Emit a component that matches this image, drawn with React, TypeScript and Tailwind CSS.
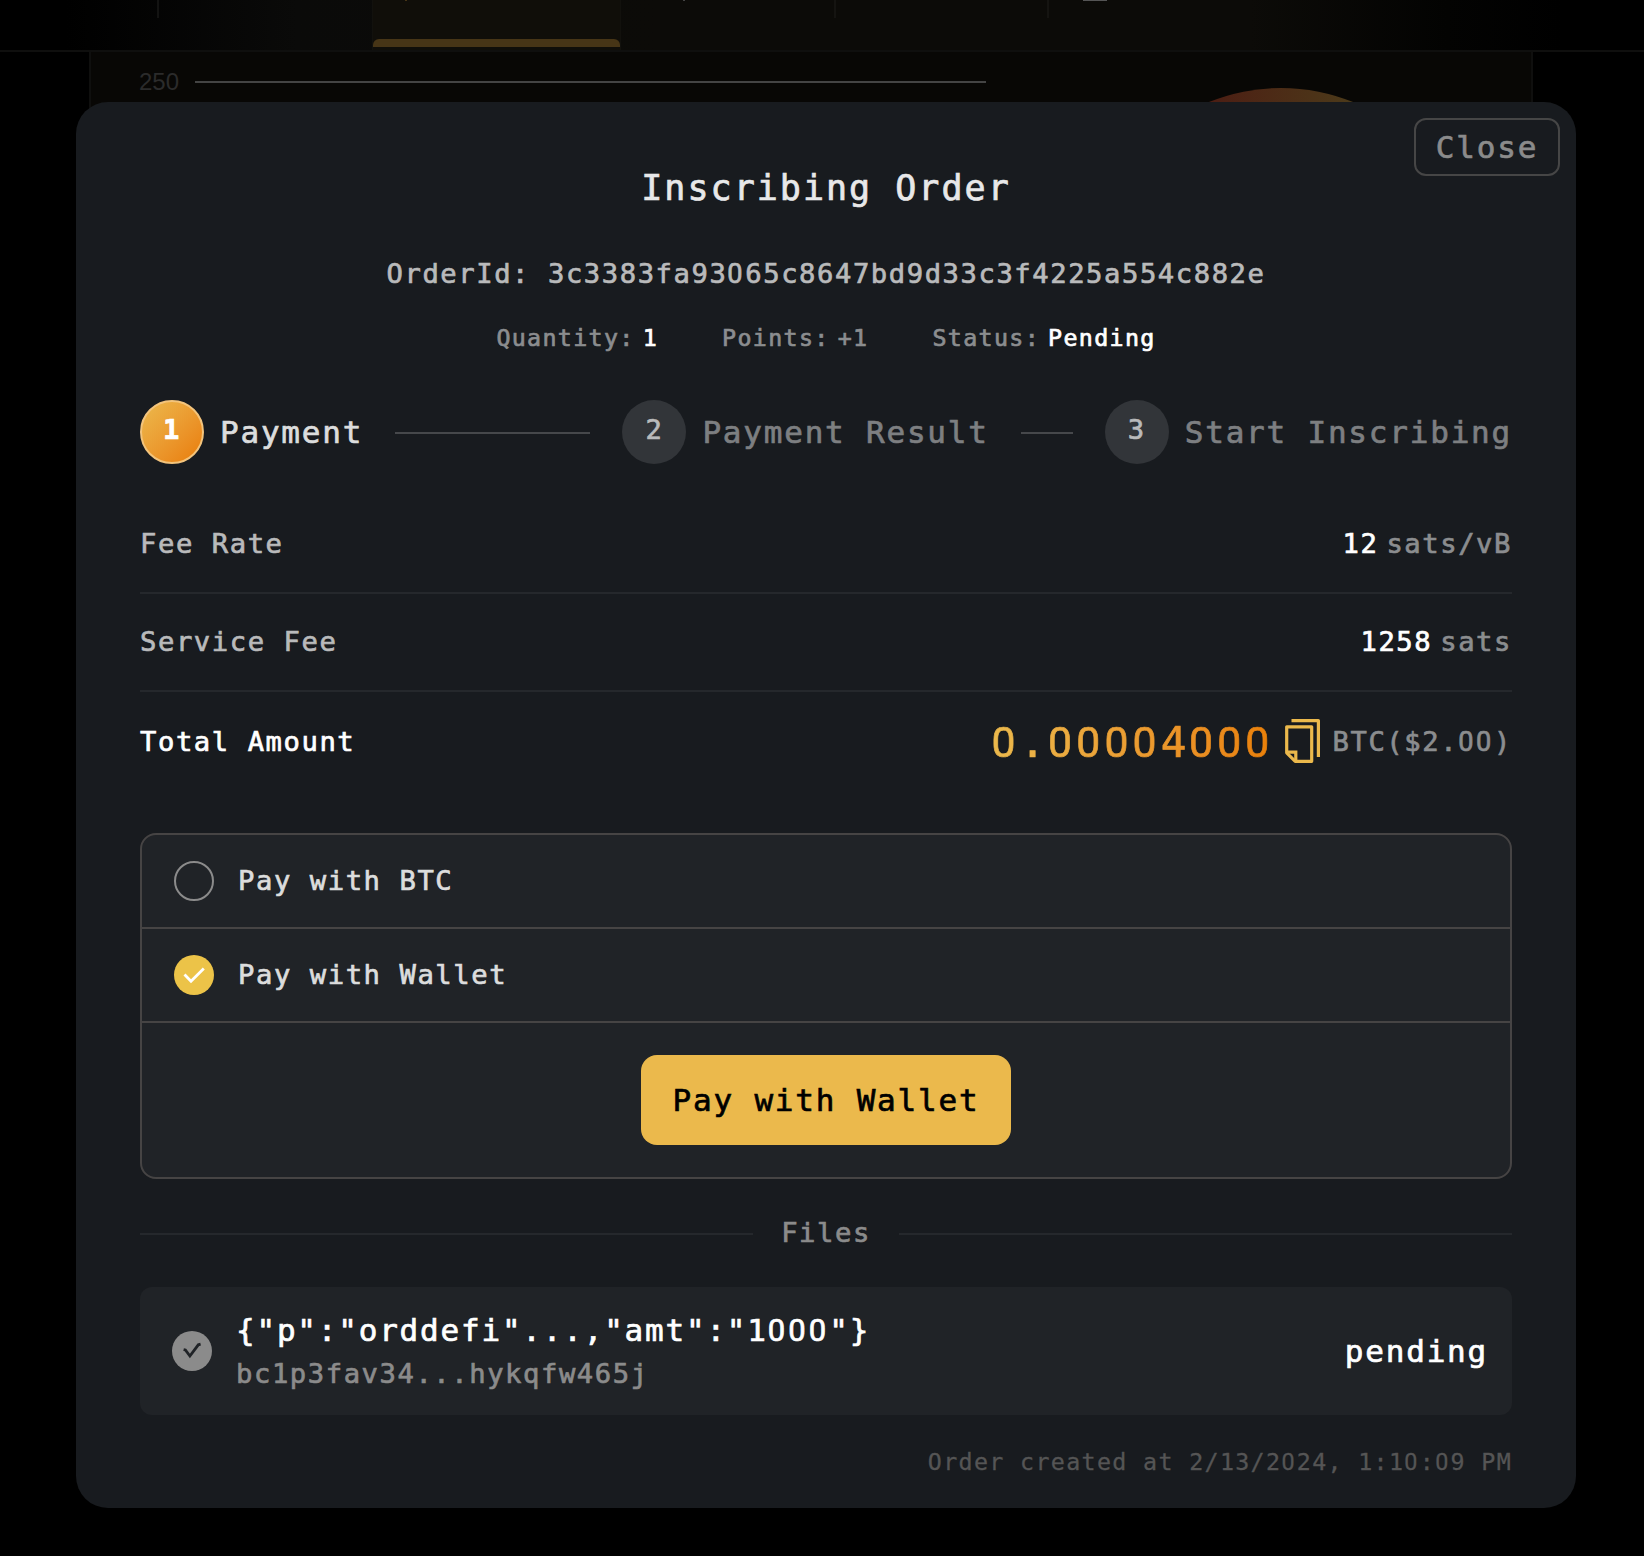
import React from "react";

/* Monospaced text; zeros are set in the open, undotted form. */
function Mono({ children }: { children: string }) {
  return (
    <>
      {children.split(/(0+)/).map((part, i) =>
        part.startsWith("0") ? (
          <span key={i} className="font-[Roboto] leading-none tracking-[0.0985em]!">
            {part}
          </span>
        ) : (
          part
        ),
      )}
    </>
  );
}

function CopyIcon() {
  return (
    <svg viewBox="0 0 44 44" className="mx-[7.5px] -mt-0.5 size-11 shrink-0" fill="none" stroke="#ebb94c" strokeWidth="3.2">
      <path d="M10.5 1.6H37.4V38" strokeLinejoin="round" />
      <path d="M5.7 7.8H30.7V42.3H14.2L5.7 33.8Z" strokeLinejoin="round" />
      <path d="M5.7 33.2H14.8V42.3" />
    </svg>
  );
}

function Check({ className, stroke, d }: { className: string; stroke: string; d: string }) {
  return (
    <span className={className}>
      <svg viewBox="0 0 40 40" className="size-10" fill="none" stroke={stroke} strokeWidth="2.8">
        <path d={d} />
      </svg>
    </span>
  );
}

function Step({ n, label, active, last }: { n: string; label: string; active?: boolean; last?: boolean }) {
  return (
    <div className={last ? "flex flex-none items-center" : "flex min-w-0 flex-1 items-center"}>
      <span
        className={
          active
            ? "flex size-16 shrink-0 items-center justify-center rounded-full border-2 border-[#f3c47c] bg-linear-to-br from-[#ebb94c] to-[#e97c00] pb-1 text-[27.2px] font-bold text-white"
            : "flex size-16 shrink-0 items-center justify-center rounded-full bg-[#323539] pb-1 text-[27.2px] text-[#b9babb]"
        }
      >
        {n}
      </span>
      <span
        className={
          active
            ? "ml-4 text-[31px] whitespace-nowrap text-[#dcdddd]"
            : "ml-4 text-[31px] whitespace-nowrap text-[#7d7f81]"
        }
      >
        {label}
      </span>
      {!last && <span className="mx-8 mt-0.5 h-0.5 flex-1 bg-[#46484b]" />}
    </div>
  );
}

function Backdrop() {
  return (
    <div className="h-full w-full bg-black">
      <header className="flex h-[52px] border-b-2 border-[#0f0f0e] bg-[linear-gradient(90deg,#000_4%,#0a0a09_18%,#0c0b08_40%,#0c0b08_76%,#030302_88%,#000_95%)] pl-[157px]">
        <div className="h-[18px] w-[215px] border-l-2 border-[#131312]" />
        <div className="flex w-[249px] flex-col border-x border-[#12110d] bg-[#100e09]">
          <div className="ml-8 h-px w-0.5 bg-[#473516]" />
          <div className="mt-[38px] h-2 rounded-t-md bg-[#473516]" />
        </div>
        <div className="h-[18px] w-[213px] pl-[62px]">
          <div className="h-px w-0.5 bg-[#444]" />
        </div>
        <div className="h-[18px] w-[213px] border-l-2 border-[#151411]" />
        <div className="h-[18px] w-[213px] border-l-2 border-[#151411] pl-[34px]">
          <div className="h-px w-6 bg-[#555]" />
        </div>
      </header>
      <div className="ml-[89px] flex h-[300px] w-[1444px] items-start border-x-2 border-[#0f0f0e] bg-[#080705] pl-12">
        <span className="mt-4 font-['Liberation_Sans'] text-[24px] leading-[28px] tracking-normal! text-[#2b2b2b]">
          250
        </span>
        <div className="mt-[29px] ml-4 h-0.5 w-[791px] bg-[#444]" />
        <div className="mt-9 ml-[103px] h-[384px] w-[384px] shrink-0 rounded-full bg-linear-to-r from-[#4c1c13] from-30% to-[#4b3b1a] to-70%" />
      </div>
    </div>
  );
}

export default function App() {
  return (
    <div className="relative h-[1556px] w-[1644px] overflow-hidden bg-black font-['DejaVu_Sans_Mono',monospace] **:tracking-[0.0577em]">
      <Backdrop />
      <section className="absolute top-[102px] left-[76px] h-[1406px] w-[1500px] rounded-[32px] bg-[#181b1f] px-16 [-webkit-text-stroke-width:0.7px]">
        <button className="absolute top-4 right-4 flex h-[58px] w-[146px] items-center justify-center rounded-xl border-2 border-[#464646] text-[31px] text-[#8b8b8b]">
          Close
        </button>

        <h1 className="pt-[62px] text-center text-[35px] leading-[48px] text-[#e8e8e9]">Inscribing Order</h1>
        <p className="mt-[42px] text-center text-[27.2px] leading-[40px] whitespace-nowrap text-[#b9babb]">
          <Mono>OrderId: 3c3383fa93065c8647bd9d33c3f4225a554c882e</Mono>
        </p>
        <div className="mt-[27px] flex justify-center gap-16 text-[23.3px] leading-[34px] text-[#8b8d8f]">
          <div className="flex gap-2">
            <span>Quantity:</span>
            <span className="text-white">1</span>
          </div>
          <div className="flex gap-2">
            <span>Points:</span>
            <span>+1</span>
          </div>
          <div className="flex gap-2">
            <span>Status:</span>
            <span className="text-white">Pending</span>
          </div>
        </div>

        <div className="mt-[45px] flex">
          <Step n="1" label="Payment" active />
          <Step n="2" label="Payment Result" />
          <Step n="3" label="Start Inscribing" last />
        </div>

        <div className="mt-8 text-[27.2px]">
          <div className="flex h-[98px] items-center justify-between border-b-2 border-[#25282c]">
            <span className="text-[#b9babb]">Fee Rate</span>
            <div className="flex gap-2">
              <span className="text-white">12</span>
              <span className="text-[#8b8d8f]">sats/vB</span>
            </div>
          </div>
          <div className="flex h-[98px] items-center justify-between border-b-2 border-[#25282c]">
            <span className="text-[#b9babb]">Service Fee</span>
            <div className="flex gap-2">
              <span className="text-white">1258</span>
              <span className="text-[#8b8d8f]">sats</span>
            </div>
          </div>
          <div className="flex h-[100px] items-center justify-between">
            <span className="text-white">Total Amount</span>
            <div className="flex items-center">
              <span className="bg-linear-to-r from-[#ebb94c] to-[#e97f05] bg-clip-text text-[42.7px] text-transparent">
                <Mono>0.00004000</Mono>
              </span>
              <CopyIcon />
              <span className="text-[#8b8d8f]">
                <Mono>BTC($2.00)</Mono>
              </span>
            </div>
          </div>
        </div>

        <div className="mt-[41px] rounded-2xl border-2 border-[#464444] bg-[#202327] text-[27.2px] text-[#dcdddd]">
          <div className="flex h-[94px] items-center gap-6 border-b-2 border-[#464444] px-8">
            <span className="size-10 rounded-full border-2 border-[#8b8b8b]" />
            <span>Pay with BTC</span>
          </div>
          <div className="flex h-[94px] items-center gap-6 border-b-2 border-[#464444] px-8">
            <Check className="size-10 rounded-full bg-[#ecc348]" stroke="#ffffff" d="M10.5 19.5L17 26.2L29.8 13.4" />
            <span>Pay with Wallet</span>
          </div>
          <div className="flex justify-center py-8">
            <button className="h-[90px] rounded-2xl bg-[#ebb94c] px-8 text-[31px] text-black">Pay with Wallet</button>
          </div>
        </div>

        <div className="mt-[34px] flex h-10 items-center gap-7 text-[27.2px] text-[#8b8b8b]">
          <span className="mt-0.5 h-0.5 flex-1 bg-[#25282c]" />
          <span>Files</span>
          <span className="mt-0.5 h-0.5 flex-1 bg-[#25282c]" />
        </div>

        <div className="mt-[34px] flex h-32 items-center rounded-xl bg-[#202327] pr-6 pl-8">
          <Check
            className="size-10 rounded-full bg-[#8b8b8b]"
            stroke="#202327"
            d="M11.6 18.6L13.4 19L17.9 25L26.3 13.8L28.6 13.2"
          />
          <div className="ml-6 flex-1">
            <p className="text-[31px] leading-[44px] whitespace-nowrap text-white">
              <Mono>{'{"p":"orddefi"...,"amt":"1000"}'}</Mono>
            </p>
            <p className="text-[27.2px] leading-[43px] text-[#8b8b8b]">bc1p3fav34...hykqfw465j</p>
          </div>
          <span className="text-[31px] text-white">pending</span>
        </div>

        <p className="mt-[30px] text-right text-[23.3px] leading-[34px] text-[#555555] [-webkit-text-stroke-width:0.3px]">
          <Mono>Order created at 2/13/2024, 1:10:09 PM</Mono>
        </p>
      </section>
    </div>
  );
}
